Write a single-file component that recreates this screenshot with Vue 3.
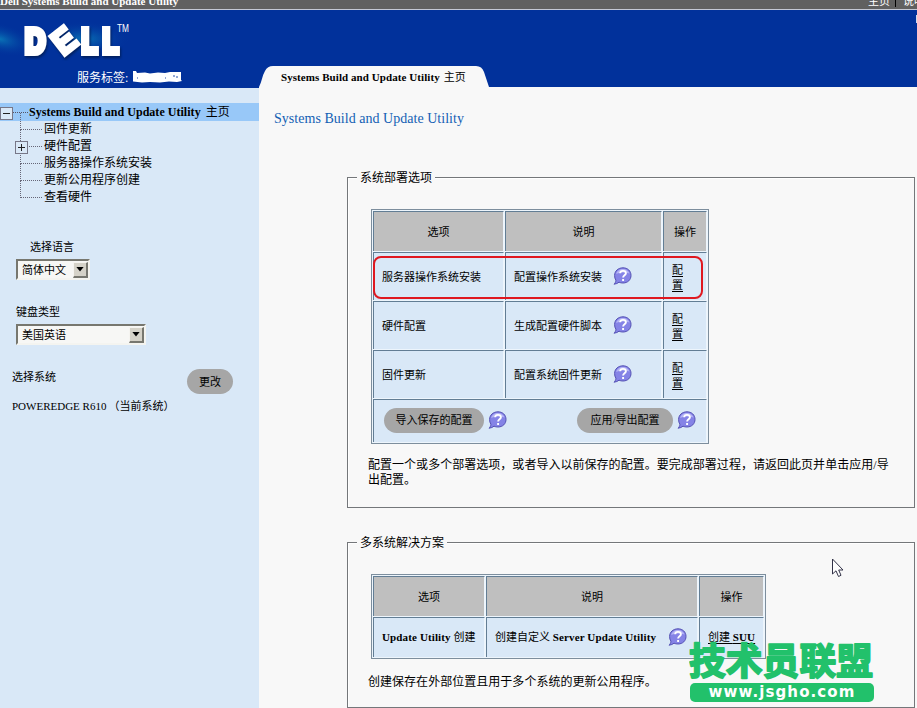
<script setup>
import { h } from 'vue'

const treeItems = [
  { label: '固件更新' },
  { label: '硬件配置', expandable: true },
  { label: '服务器操作系统安装' },
  { label: '更新公用程序创建' },
  { label: '查看硬件' },
]

const deployRows = [
  { name: '服务器操作系统安装', desc: '配置操作系统安装' },
  { name: '硬件配置', desc: '生成配置硬件脚本' },
  { name: '固件更新', desc: '配置系统固件更新' },
]

const HelpIcon = () =>
  h('svg', { width: 19, height: 18, viewBox: '0 0 19 18' }, [
    h('path', {
      d: 'M10 .8c4.7 0 8 3.2 8 7.6s-3.300 7.600-8 7.600c-1.500 0-2.800-.2-4-.8-1.200 1-2.900 1.800-5 2 1.200-1.100 1.900-2.500 1.900-4C2 12 1.600 10.300 1.600 8.400 1.600 4 5.300.8 10 .8z',
      fill: '#8583e6',
      stroke: '#5552b4',
      'stroke-width': 1,
    }),
    h('path', { d: 'M3.200 7C4 3.500 7 2 10 2s5.500 1.500 6.500 4.500C12 5 8 5 3.200 7z', fill: '#b5b4f5' }),
    h('path', {
      d: 'M7.200 6.300c0-3.200 5.700-3.200 5.700 0 0 2.100-2.800 2-2.800 4.200M10.100 12v1.900',
      fill: 'none',
      stroke: '#fff',
      'stroke-width': 1.9,
    }),
  ])
</script>

<template>
  <div class="screen">
    <div class="topbar">
      <b class="product">Dell Systems Build and Update Utility</b>
      <span class="home">主页</span>
      <i class="bar"></i>
      <span>说明</span>
    </div>

    <header class="banner">
      <div class="brand">
        <svg class="logo" width="140" height="50" viewBox="0 0 140 50">
          <defs>
            <radialGradient id="glow">
              <stop offset="0" stop-color="#0b83bd" stop-opacity=".8" />
              <stop offset="1" stop-color="#01319b" stop-opacity="0" />
            </radialGradient>
          </defs>
          <ellipse cx="0" cy="28" rx="36" ry="16" fill="url(#glow)" transform="rotate(14 0 28)" />
          <ellipse cx="84" cy="28" rx="46" ry="18" fill="url(#glow)" />
          <g class="dell">
            <text x="25" y="41.700" textLength="20.400" lengthAdjust="spacingAndGlyphs">D</text>
            <text x="-10.500" y="11" textLength="21" lengthAdjust="spacingAndGlyphs" class="tilted" transform="translate(64.500 30) rotate(-38)">E</text>
            <text x="81.600" y="41.700" textLength="16" lengthAdjust="spacingAndGlyphs">L</text>
            <text x="102.400" y="41.700" textLength="16" lengthAdjust="spacingAndGlyphs">L</text>
          </g>
          <text x="117" y="21" class="tm" textLength="12" lengthAdjust="spacingAndGlyphs">TM</text>
        </svg>
        <div class="tag">
          <span>服务标签:</span>
          <svg width="49" height="12" viewBox="0 0 49 12">
            <path d="M0 0h3l1 2 8-.500 5 1 8-1 7 .500 5-1h11v8l1 1-5 1-8-.500-9 1-10-.500-8 .5-9-1z" fill="#fff" />
            <path d="M4 7h1M32 7h1M40 5h2m1 1h2" stroke="#2450aa" />
          </svg>
        </div>
      </div>
      <div class="tab">
        <svg class="tab-shape" width="230" height="21" viewBox="0 0 230 21">
          <path d="M0 21C3 15 3 10 6 5Q8.500 0 14 0H217Q223 0 225 6L230 21z" fill="#f8f8f8" />
        </svg>
        <b>Systems Build and Update Utility</b><span>主页</span>
      </div>
      <i class="edge"></i>
    </header>

    <div class="body">
      <aside>
        <div class="root">
          <i class="toggle"></i>
          <b>Systems Build and Update Utility</b><span>主页</span>
        </div>
        <ul class="tree">
          <li v-for="item in treeItems" :key="item.label">
            <i v-if="item.expandable" class="toggle plus"></i>
            {{ item.label }}
          </li>
        </ul>

        <div class="label language">选择语言</div>
        <div class="select short"><span>简体中文</span><i class="drop"></i></div>
        <div class="label keyboard">键盘类型</div>
        <div class="select long"><span>美国英语</span><i class="drop"></i></div>
        <div class="system">
          <span>选择系统</span>
          <button>更改</button>
        </div>
        <div class="model"><span>POWEREDGE R610</span>（当前系统）</div>
      </aside>

      <main>
        <h1>Systems Build and Update Utility</h1>

        <section class="group first">
          <h2>系统部署选项</h2>
          <div class="table deploy">
            <div class="cell head">选项</div>
            <div class="cell head">说明</div>
            <div class="cell head">操作</div>
            <template v-for="row in deployRows" :key="row.name">
              <div class="cell">{{ row.name }}</div>
              <div class="cell">{{ row.desc }}<HelpIcon class="help" /></div>
              <div class="cell action"><a>配<br />置</a></div>
            </template>
            <div class="cell foot">
              <button class="import">导入保存的配置</button><HelpIcon />
              <button class="apply">应用/导出配置</button><HelpIcon />
            </div>
            <div class="highlight"></div>
          </div>
          <p>配置一个或多个部署选项，或者导入以前保存的配置。要完成部署过程，请返回此页并单击应用/导<br />出配置。</p>
        </section>

        <section class="group second">
          <h2>多系统解决方案</h2>
          <div class="table multi">
            <div class="cell head">选项</div>
            <div class="cell head">说明</div>
            <div class="cell head">操作</div>
            <div class="cell wide"><b>Update Utility</b>&nbsp;创建</div>
            <div class="cell wide">创建自定义&nbsp;<b>Server Update Utility</b><HelpIcon class="help" /></div>
            <div class="cell wide"><a>创建 <b>SUU</b></a></div>
          </div>
          <p>创建保存在外部位置且用于多个系统的更新公用程序。</p>
        </section>
      </main>
    </div>

    <svg class="cursor" width="13" height="20" viewBox="0 0 13 20">
      <path d="M1.500 1v15l3.500-3.200L7.500 18.500l2.500-1.200L7.700 12H12z" fill="#fff" stroke="#333348" />
    </svg>

    <div class="watermark">
      <svg width="186" height="44" viewBox="0 0 186 44">
        <text x="0" y="36" textLength="184" lengthAdjust="spacingAndGlyphs">技术员联盟</text>
      </svg>
      <div class="site">www.jsgho.com</div>
    </div>
  </div>
</template>

<style>
body {
  overflow: hidden;
}
</style>

<style scoped>
.screen {
  position: relative;
  width: 917px;
  height: 708px;
  overflow: hidden;
  display: flex;
  flex-direction: column;
  background: #f8f8f8;
  color: #000;
  font: 11px/15px 'Liberation Serif', 'Noto Sans CJK SC', serif;
  white-space: nowrap;
}
.topbar {
  box-sizing: border-box;
  height: 10px;
  flex: none;
  display: flex;
  overflow: hidden;
  background: #606060;
  border-bottom: 1px solid #c4c8d4;
  color: #fff;
  line-height: 14px;
}
.topbar > * {
  flex: none;
  margin-top: -6px;
}
.product {
  width: 868px;
  font-size: 11px;
}
.home {
  width: 27px;
}
.bar {
  width: 1px;
  height: 13px;
  margin-right: 7px;
  background: #000;
}
.banner {
  position: relative;
  height: 77px;
  flex: none;
  display: flex;
  align-items: flex-end;
  background: #01319b;
}
.edge {
  position: absolute;
  right: 0;
  top: 5px;
  width: 1px;
  height: 8px;
  background: #cfd9ee;
}
.brand {
  width: 259px;
  height: 77px;
}
.logo {
  display: block;
  margin-top: 1px;
}
.dell {
  font: bold 35px 'Liberation Sans', sans-serif;
  fill: #fff;
  stroke: #fff;
  stroke-width: 6px;
  filter: drop-shadow(1px 2px 1px #01205f);
}
.tilted {
  font-size: 34px;
  stroke-width: 4px;
}
.tm {
  font: 10px 'Liberation Sans', sans-serif;
  fill: #fff;
}
.tag {
  display: flex;
  align-items: center;
  margin: 10px 0 0 77px;
  gap: 5px;
  color: #fff;
  font-size: 12px;
}
.tag svg {
  margin-top: -3px;
}
.tab {
  position: relative;
  z-index: 0;
  display: flex;
  width: 230px;
  height: 21px;
  box-sizing: border-box;
  padding: 4px 0 0 22px;
  gap: 4px;
}
.tab b {
  letter-spacing: 0.07px;
}
.tab-shape {
  position: absolute;
  z-index: -1;
  left: 0;
  top: 0;
}
.body {
  flex: 1;
  display: flex;
  min-height: 0;
}
aside {
  box-sizing: border-box;
  width: 259px;
  padding-top: 15px;
  background: #d9e8f7;
  border-top: 1px solid #01319b;
}
.root {
  display: flex;
  align-items: center;
  gap: 5px;
  height: 18px;
  background: #98c8f8;
  font-size: 12px;
}
.root b {
  margin-left: 12px;
  letter-spacing: 0.03px;
}
.root .toggle {
  top: 1px;
}
.root .toggle::after {
  content: '';
  position: absolute;
  left: 12px;
  top: 4px;
  width: 15px;
  border-top: 1px dotted #556;
}
.toggle {
  position: relative;
  box-sizing: border-box;
  width: 13px;
  height: 13px;
  margin-right: -1px;
  border: 1px solid #778;
  background: linear-gradient(#222, #222) center / 7px 1px no-repeat #d9e8f7;
}
.toggle.plus {
  position: absolute;
  left: -5px;
  top: 3px;
  background: linear-gradient(#222, #222) center / 7px 1px no-repeat, linear-gradient(#222, #222) center / 1px 7px no-repeat #d9e8f7;
}
.tree {
  margin: 0 0 0 20px;
  padding: 0;
  list-style: none;
  font-size: 12px;
  line-height: 17px;
}
.tree li {
  position: relative;
  height: 17px;
  padding-left: 24px;
}
.tree li::before {
  content: '';
  position: absolute;
  left: 0;
  top: -8px;
  width: 22px;
  height: 17px;
  box-sizing: border-box;
  border-left: 1px dotted #667;
  border-bottom: 1px dotted #667;
}
.tree .plus {
  z-index: 1;
}
.language {
  margin: 34px 0 0 30px;
}
.keyboard {
  margin: 25px 0 0 16px;
}
.select {
  box-sizing: border-box;
  display: flex;
  align-items: center;
  justify-content: space-between;
  height: 21px;
  margin: 4px 0 0 16px;
  padding-left: 4px;
  background: #f7f7f5;
  border: 2px solid #f4f4f0;
  border-top-color: #77776f;
  border-left-color: #77776f;
}
.select span {
  padding-top: 1px;
}
.select.short {
  width: 74px;
}
.select.long {
  width: 130px;
}
.drop {
  box-sizing: border-box;
  width: 15px;
  height: 16px;
  background: #d5d2c8;
  border: 1px solid #f5f4f0;
  border-right: 2px solid #77776f;
  border-bottom: 2px solid #77776f;
}
.drop::after {
  content: '';
  display: block;
  width: 8px;
  height: 5px;
  margin: 4px 0 0 2px;
  background: #000;
  clip-path: polygon(0 0, 100% 0, 50% 100%);
}
.system {
  display: flex;
  justify-content: space-between;
  margin: 24px 26px 0 12px;
}
.system span {
  margin-top: 1px;
}
button {
  flex: none;
  width: 46px;
  height: 25px;
  padding: 1px 0 0;
  border: 0;
  border-radius: 13px;
  background: #a6a6a6;
  color: #000;
  font: inherit;
}
.model {
  margin: 5px 0 0 12px;
}
.model span {
  margin-right: 2px;
}
main {
  flex: 1;
}
h1 {
  margin: 23px 0 0 15px;
  color: #145fb4;
  font-size: 14px;
  font-weight: 400;
  line-height: 17px;
  letter-spacing: 0.03px;
}
.group {
  box-sizing: border-box;
  width: 568px;
  margin-left: 88px;
  padding: 1px 0 0 20px;
  border: 1px solid #74777a;
  box-shadow: inset 1px 1px #fff;
}
.first {
  height: 331px;
  margin-top: 50px;
}
.second {
  height: 166px;
  margin-top: 34px;
}
h2 {
  width: max-content;
  margin: -9px 0 0 -11px;
  padding: 1px 3px 0;
  background: #f8f8f8;
  font-size: 12px;
  font-weight: 400;
  line-height: 15px;
}
.table {
  position: relative;
  box-sizing: border-box;
  display: grid;
  gap: 1px;
  margin: 23px 0 0 3px;
  padding: 1px;
  border: 1px solid #7d8e9d;
  background: #edf5fc;
}
.deploy {
  width: 338px;
  height: 235px;
  grid-template: 40px 48px 48px 48px 43px / 131px 157px 44px;
}
.multi {
  width: 395px;
  height: 85px;
  grid-template: 40px 40px / 112px 212px 65px;
}
.cell {
  display: flex;
  align-items: center;
  padding: 1px 0 0 8px;
  background: #d9e8f7;
  border-top: 1px solid #627d94;
  border-left: 1px solid #627d94;
  border-right: 1px solid #edf5fc;
}
.head {
  justify-content: center;
  padding: 1px 0 0;
  background: #bfbfbf;
}
.wide {
  padding: 0 0 1px 8px;
}
.wide b {
  letter-spacing: 0.13px;
}
.action {
  padding-top: 3px;
}
.help {
  margin: -2px 0 0 11px;
}
.wide .help {
  margin: 0 0 0 12px;
}
.foot {
  grid-column: 1 / -1;
  gap: 4px;
  padding: 0 10px 2px;
}
.import {
  width: 100px;
}
.apply {
  width: 96px;
  margin-left: auto;
}
a {
  text-decoration: underline;
  text-underline-offset: 2px;
}
.highlight {
  position: absolute;
  box-sizing: border-box;
  left: 1px;
  top: 46px;
  width: 330px;
  height: 43px;
  border: 2px solid #df1820;
  border-radius: 8px;
}
p {
  margin: 14px 0 0;
  font-size: 12px;
  line-height: 15px;
  letter-spacing: 0.03px;
}
.second p {
  margin-top: 16px;
}
.cursor {
  position: absolute;
  left: 831px;
  top: 558px;
}
.watermark {
  position: absolute;
  left: 689px;
  top: 639px;
}
.watermark svg {
  display: block;
}
.watermark text {
  fill: #22c16b;
  stroke: #22c16b;
  stroke-width: 1.8px;
  stroke-linejoin: round;
  font: 700 37px 'Noto Sans CJK SC', sans-serif;
}
.site {
  width: 184px;
  height: 19px;
  margin-left: 1px;
  border-radius: 5px;
  background: #22c16b;
  color: #fff;
  text-align: center;
  font: bold 15px/18px 'DejaVu Sans', sans-serif;
  letter-spacing: 1.1px;
}
</style>
